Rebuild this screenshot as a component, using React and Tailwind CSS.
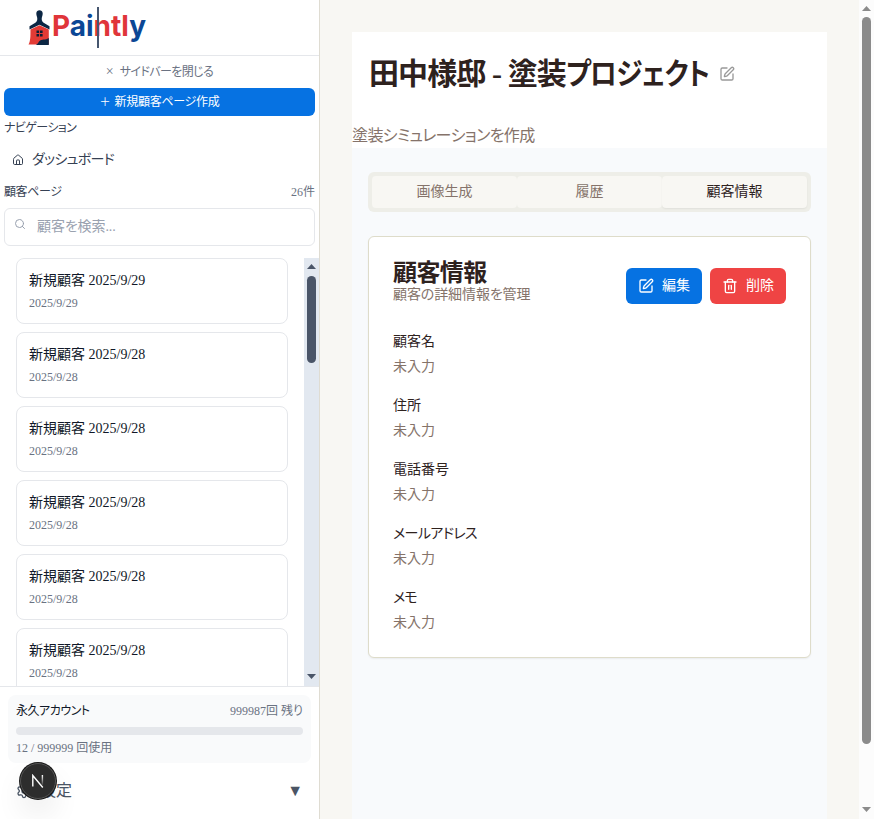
import React from 'react';
import { House, Search, SquarePen, Trash2, Settings } from 'lucide-react';

const customers = ['2025/9/29', '2025/9/28', '2025/9/28', '2025/9/28', '2025/9/28', '2025/9/28'];
const fields = [
  { name: '顧客名', tracking: '' },
  { name: '住所', tracking: '' },
  { name: '電話番号', tracking: '' },
  { name: 'メールアドレス', tracking: 'tracking-[-0.6px]' },
  { name: 'メモ', tracking: 'tracking-[-1px]' },
];

function Logo() {
  return (
    <svg width="125" height="48" viewBox="0 0 125 48" className="ml-6" aria-label="Paintly">
      <path d="M12.300 9.500c0-4.200 6.400-4.200 6.400 0 0 2-1 3.500-1 5.500 0 2 1 3.300 2.800 4.200l5 3v3.300l-10-4.700-10 4.700v-3.300l5-3c1.800-1 2.800-2.200 2.800-4.200s-1-3.500-1-5.500z" fill="#0c2744" />
      <path d="M6.500 25.500l9-4.300 9.300 4.300v15H4.500c2-3.500 2-8 2-15z" fill="#e23b35" />
      <path d="M12 41c1-1 2-1.500 3-3.500 3-3 6-1 9.800-3.500V41z" fill="#0c2744" />
      <path d="M12.500 26.500h2.600v2.600h-2.600zM16 26.500h2.600v2.600H16zM12.500 30h2.600v2.600h-2.600zM16 30h2.600v2.600H16z" fill="#0c1d33" />
      <text x="28" y="31.500" textLength="94" lengthAdjust="spacingAndGlyphs" className="font-['Inter',sans-serif] text-[29px] font-bold">
        <tspan fill="#e0353a">P</tspan><tspan fill="#0b4795">ai</tspan><tspan fill="#e0353a">ntl</tspan><tspan fill="#0b4795">y</tspan>
      </text>
      <rect x="73" y="3" width="2" height="41" fill="#46566f" />
    </svg>
  );
}

function Sidebar() {
  return (
    <aside className="flex h-full w-80 shrink-0 flex-col border-r border-[#dfdcd2] bg-white">
      <div className="h-14 shrink-0 border-b border-gray-200 pt-1"><Logo /></div>
      <div className="flex h-8 shrink-0 items-center justify-center gap-1.5 text-xs text-gray-500">
        <span className="text-sm">×</span><span className="tracking-[-0.6px]">サイドバーを閉じる</span>
      </div>
      <div className="flex shrink-0 flex-col px-1">
        <button className="flex h-7 items-center justify-center gap-1 rounded-md bg-[#0672e2] text-xs text-white">
          <span className="text-[11px]">＋</span><span className="tracking-[-0.3px]">新規顧客ページ作成</span>
        </button>
        <div className="h-6 text-xs leading-6 tracking-[-0.6px] text-gray-700">ナビゲーション</div>
        <div className="flex h-[39px] items-center gap-2 px-2 pt-px text-sm tracking-[-0.7px] text-gray-700">
          <House size={12} strokeWidth={2} />ダッシュボード
        </div>
        <div className="flex h-[29px] items-center justify-between pb-1 text-xs">
          <span className="tracking-[-0.4px] text-gray-700">顧客ページ</span><span className="text-gray-500">26件</span>
        </div>
        <div className="flex h-[38px] rounded-md border border-gray-200 pl-[9px] text-sm text-gray-400">
          <Search size={12} className="mt-[9px]" /><span className="ml-[11px] leading-[35px] tracking-[-0.1px]">顧客を検索...</span>
        </div>
      </div>
      <div className="mt-3 flex min-h-0 flex-1">
        <div className="flex min-w-0 flex-1 flex-col gap-2 overflow-hidden pl-4 pr-4">
          {customers.map((date, i) => (
            <div key={i} className="h-[66px] shrink-0 rounded-lg border border-gray-200 px-3 pt-3">
              <div className="text-sm text-gray-900">新規顧客 {date}</div>
              <div className="mt-1 text-xs leading-4 text-gray-500">{date}</div>
            </div>
          ))}
        </div>
        <div className="flex w-[15px] flex-col items-center bg-slate-200">
          <svg width="15" height="18" viewBox="0 0 15 18"><path d="M3 11h9L7.500 6z" fill="#4a5568" /></svg>
          <div className="h-[87px] w-[9px] rounded-full bg-[#4a5568]" />
          <svg className="mt-auto" width="15" height="15" viewBox="0 0 15 15"><path d="M3 3h9L7.500 8z" fill="#4a5568" /></svg>
        </div>
      </div>
      <div className="h-[133px] shrink-0 border-t border-gray-200 p-2">
        <div className="h-[68px] rounded-lg bg-gray-50 px-2 pt-2 text-xs">
          <div className="flex justify-between leading-4"><span className="tracking-[-0.5px] text-gray-900">永久アカウント</span><span className="text-gray-500">999987回 残り</span></div>
          <div className="mt-2 h-2 rounded-full bg-gray-200" />
          <div className="mt-[5px] leading-4 text-gray-500">12 / 999999 回使用</div>
        </div>
        <div className="relative mt-2 flex h-10 items-center justify-between px-2 text-base text-gray-600">
          <span className="flex items-center gap-2"><Settings size={16} />設定</span><span>▼</span>
          <div className="absolute left-3 top-[-8px] flex size-9 items-center justify-center rounded-full border border-[#555] bg-[#2d2d2d] shadow-[0_0_0_1px_#171717,0_16px_32px_-8px_rgba(0,0,0,0.24)]">
            <svg width="14" height="14" viewBox="0 0 14 14" fill="none">
              <defs><linearGradient id="fade" x1="0" y1="0" x2="0" y2="1"><stop stopColor="#fff" /><stop offset="1" stopColor="#fff" stopOpacity="0.1" /></linearGradient></defs>
              <path d="M1.800 12.500V1.500l10 12" stroke="#fff" strokeWidth="1.400" />
              <rect x="10.700" y="1" width="1.400" height="10" fill="url(#fade)" />
            </svg>
          </div>
        </div>
      </div>
    </aside>
  );
}

function CustomerCard() {
  return (
    <section className="mx-4 mt-6 h-[422px] rounded-md border border-[#dedcca] bg-white px-6 pt-6 text-sm shadow-[0_1px_2px_rgba(0,0,0,0.06)]">
      <div className="flex h-[66px] justify-between">
        <div>
          <h2 className="text-2xl leading-6 font-bold tracking-tight text-[#2e221e]">顧客情報</h2>
          <p className="leading-5 tracking-[-0.1px] text-[#85736a]">顧客の詳細情報を管理</p>
        </div>
        <div className="mt-[7px] flex h-9 gap-2 text-white">
          <button className="flex w-[76px] items-center gap-2 rounded-md bg-[#0672e2] pl-3"><SquarePen size={16} />編集</button>
          <button className="flex w-[76px] items-center gap-2 rounded-md bg-[#ef4444] pl-3"><Trash2 size={16} />削除</button>
        </div>
      </div>
      <div className="mt-[5px] flex flex-col gap-4">
        {fields.map(({ name, tracking }) => (
          <div key={name} className="h-12">
            <div className={`leading-5 text-[#2e221e] ${tracking}`}>{name}</div>
            <div className="mt-[5px] leading-5 text-[#85736a]">未入力</div>
          </div>
        ))}
      </div>
    </section>
  );
}

export default function App() {
  return (
    <div lang="ja" className="flex h-[819px] w-[874px] overflow-hidden bg-[#f8f7f3] font-['Liberation_Serif','Noto_Sans_CJK_JP',serif] [font-feature-settings:'palt']">
      <Sidebar />
      <main className="min-w-0 flex-1 px-8 pt-8">
        <div className="h-full bg-slate-50">
          <header className="h-[116px] bg-white">
            <div className="flex h-[83px] items-center pl-[17px]">
              <h1 className="flex text-3xl font-bold tracking-[-0.03em] whitespace-pre text-[#2e221e]">
                <span>田中様邸 - 塗装</span>
                <span className="-mr-[17px] inline-block origin-left scale-x-[0.89]">プロジェクト</span>
              </h1>
              <SquarePen size={16} className="ml-[9px] text-[#999]" />
            </div>
            <p className="mt-[9px] text-base tracking-[-0.6px] text-[#85736a]">塗装シミュレーションを作成</p>
          </header>
          <nav className="mx-4 mt-6 grid h-10 grid-cols-3 rounded-md bg-[#eeeee8] p-1 text-sm text-[#85736a]">
            <div className="flex items-center justify-center rounded-sm bg-[#f8f7f3] pb-px">画像生成</div>
            <div className="flex items-center justify-center rounded-sm bg-[#f8f7f3] pb-px">履歴</div>
            <div className="flex items-center justify-center rounded-sm bg-[#f8f7f3] pb-px text-[#2e221e] shadow-[0_1px_2px_rgba(0,0,0,0.06)]">顧客情報</div>
          </nav>
          <CustomerCard />
        </div>
      </main>
      <div className="flex w-[15px] shrink-0 flex-col items-center bg-[#fcfcfc]">
        <svg width="15" height="17" viewBox="0 0 15 17"><path d="M3 11h9L7.500 6z" fill="#8b8b8b" /></svg>
        <div className="h-[727px] w-[9px] rounded-full bg-[#8b8b8b]" />
        <svg className="mt-auto" width="15" height="15" viewBox="0 0 15 15"><path d="M3 3h9L7.500 8z" fill="#8b8b8b" /></svg>
      </div>
    </div>
  );
}
